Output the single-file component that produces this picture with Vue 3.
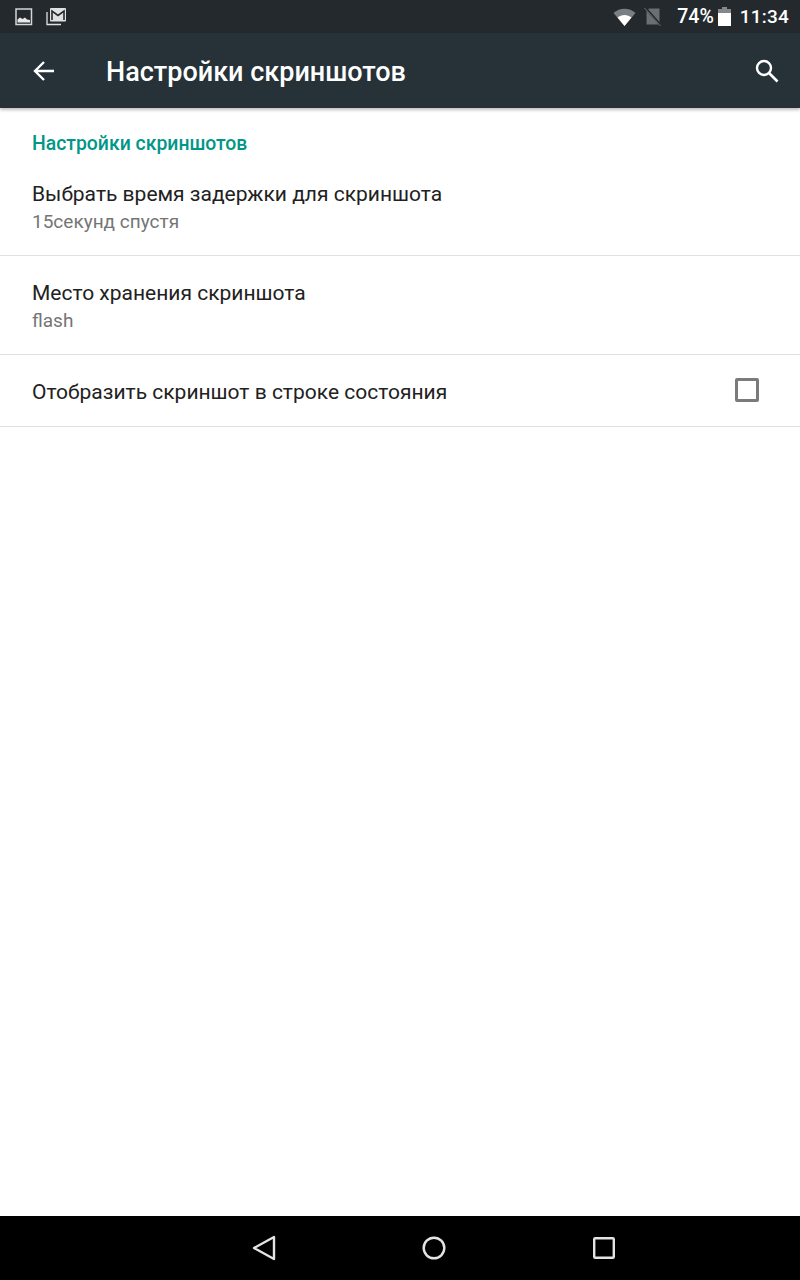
<template>
  <div class="screen">
    <!-- Статус-бар -->
    <div class="status">
      <div class="status-left">
        <svg class="ic-pic" width="18" height="18" viewBox="0 0 18 18">
          <rect x="1" y="1" width="15.5" height="15.5" fill="none" stroke="#d5d6d7" stroke-width="1.5" />
          <path d="M2.5 14.5V11.5L5 9.5L7.5 11L10 9.5L12 11.5L15 12V14.5Z" fill="#e8e8e8" />
        </svg>
        <svg class="ic-mail" width="21" height="19" viewBox="0 0 21 19">
          <path d="M1 5V17.5H15" fill="none" stroke="#e0e0e0" stroke-width="1.3" />
          <rect x="4" y="1" width="16" height="13.5" rx="1" fill="#e0e0e0" />
          <path d="M6 13V4L12 8.5L18 4V13" fill="none" stroke="#23292d" stroke-width="1.6" />
        </svg>
      </div>
      <div class="status-right">
        <svg class="ic-wifi" width="23" height="18" viewBox="0 0 23 18">
          <path d="M0.5 5C6.5 -0.8 16.5 -0.8 22.5 5L11.5 18Z" fill="#7c7f81" />
          <path d="M4.5 9.6C8.5 6.2 14.5 6.2 18.5 9.6L11.5 18Z" fill="#fff" />
        </svg>
        <svg class="ic-sim" width="18" height="20" viewBox="0 0 18 20">
          <path d="M5 1.5H15.5V17.5H2.5V4Z" fill="#6c6f71" />
          <path d="M1 0.5L17 18.5" stroke="#23292d" stroke-width="2.4" />
          <path d="M0.5 1L16.5 19" stroke="#6c6f71" stroke-width="1" />
        </svg>
        <span class="percent">74%</span>
        <svg class="ic-batt" width="13" height="19" viewBox="0 0 13 19">
          <path d="M4 0H9V2H13V19H0V2H4Z" fill="#fff" />
          <path d="M4 0H9V2H13V6H0V2H4Z" fill="#85888a" />
        </svg>
        <span class="time">11:34</span>
      </div>
    </div>

    <!-- Шапка -->
    <header class="toolbar">
      <svg class="ic-back" width="24" height="24" viewBox="0 0 24 24">
        <path d="M22 12H3M12 3L3 12L12 21" fill="none" stroke="#fff" stroke-width="2.4" />
      </svg>
      <h1 class="title">Настройки скриншотов</h1>
      <svg class="ic-search" width="26" height="26" viewBox="0 0 26 26">
        <circle cx="10" cy="10" r="7" fill="none" stroke="#fff" stroke-width="2.4" />
        <path d="M15 15L23.5 23.5" stroke="#fff" stroke-width="2.6" />
      </svg>
    </header>

    <!-- Список настроек -->
    <main class="content">
      <div class="section">Настройки скриншотов</div>
      <div class="row first">
        <div class="row-title">Выбрать время задержки для скриншота</div>
        <div class="row-sub">15секунд спустя</div>
      </div>
      <div class="row">
        <div class="row-title">Место хранения скриншота</div>
        <div class="row-sub">flash</div>
      </div>
      <div class="row single">
        <div class="row-title">Отобразить скриншот в строке состояния</div>
        <span class="check"></span>
      </div>
    </main>

    <!-- Навигация -->
    <nav class="navbar">
      <svg class="nav-back" width="24" height="26" viewBox="0 0 24 26">
        <path d="M22 2V24L2 13Z" fill="none" stroke="#e4e4e4" stroke-width="2.4" stroke-linejoin="round" />
      </svg>
      <svg class="nav-home" width="24" height="24" viewBox="0 0 24 24">
        <circle cx="12" cy="12" r="10.3" fill="none" stroke="#e4e4e4" stroke-width="2.4" />
      </svg>
      <svg class="nav-recent" width="22" height="22" viewBox="0 0 22 22">
        <rect x="1.2" y="1.2" width="19.6" height="19.6" rx="1" fill="none" stroke="#e4e4e4" stroke-width="2.4" />
      </svg>
    </nav>
  </div>
</template>

<script setup>
</script>

<style scoped>
.screen {
  width: 800px;
  height: 1280px;
  display: flex;
  flex-direction: column;
  background: #fff;
  font-family: Roboto, "Noto Sans", sans-serif;
  overflow: hidden;
}

.status {
  height: 33px;
  background: #23292d;
  display: flex;
  justify-content: space-between;
  align-items: center;
  color: #fff;
  flex: none;
}

.status-left {
  display: flex;
  align-items: center;
  padding-left: 15px;
  gap: 13px;
}

.status-right {
  display: flex;
  align-items: center;
  padding-right: 11px;
}

.ic-wifi { margin-right: 8px; }
.ic-sim { margin-right: 15px; }

.percent {
  font-size: 19.5px;
  font-weight: 500;
  margin-right: 4px;
}

.ic-batt { margin-right: 9px; }

.time {
  font-size: 19px;
  font-weight: 500;
  letter-spacing: 0.2px;
}

.toolbar {
  height: 75px;
  background: #263238;
  display: flex;
  align-items: center;
  flex: none;
  color: #fff;
  box-shadow: 0 2px 3px rgba(0, 0, 0, 0.25);
  position: relative;
}

.ic-back { margin-left: 32px; }

.title {
  margin: 2px 0 0 50px;
  font-size: 27px;
  font-weight: 500;
  flex: 1;
}

.ic-search { margin-right: 20px; }

.content {
  flex: 1;
}

.section {
  padding: 26px 32px 0;
  height: 44px;
  box-sizing: border-box;
  font-size: 19.4px;
  line-height: 20px;
  font-weight: 500;
  color: #009688;
}

.row {
  height: 99px;
  box-sizing: border-box;
  padding: 23px 32px 0;
  border-bottom: 1px solid #e0e0e0;
}

.row.first {
  height: 104px;
  padding-top: 28px;
}

.row.single {
  height: 72px;
  padding-top: 2px;
  display: flex;
  align-items: center;
  justify-content: space-between;
}

.row-title {
  font-size: 21px;
  line-height: 28px;
  color: #212121;
}

.row-sub {
  font-size: 19px;
  line-height: 28px;
  color: #757575;
}

.check {
  width: 24px;
  height: 24px;
  box-sizing: border-box;
  border: 3px solid #7b7b7b;
  border-radius: 2px;
  margin: -3px 9px 0 0;
}

.navbar {
  height: 64px;
  background: #000;
  flex: none;
  display: flex;
  align-items: center;
  justify-content: center;
  gap: 146px;
  padding-left: 67px;
}

.nav-recent { margin-left: 1px; }
</style>
